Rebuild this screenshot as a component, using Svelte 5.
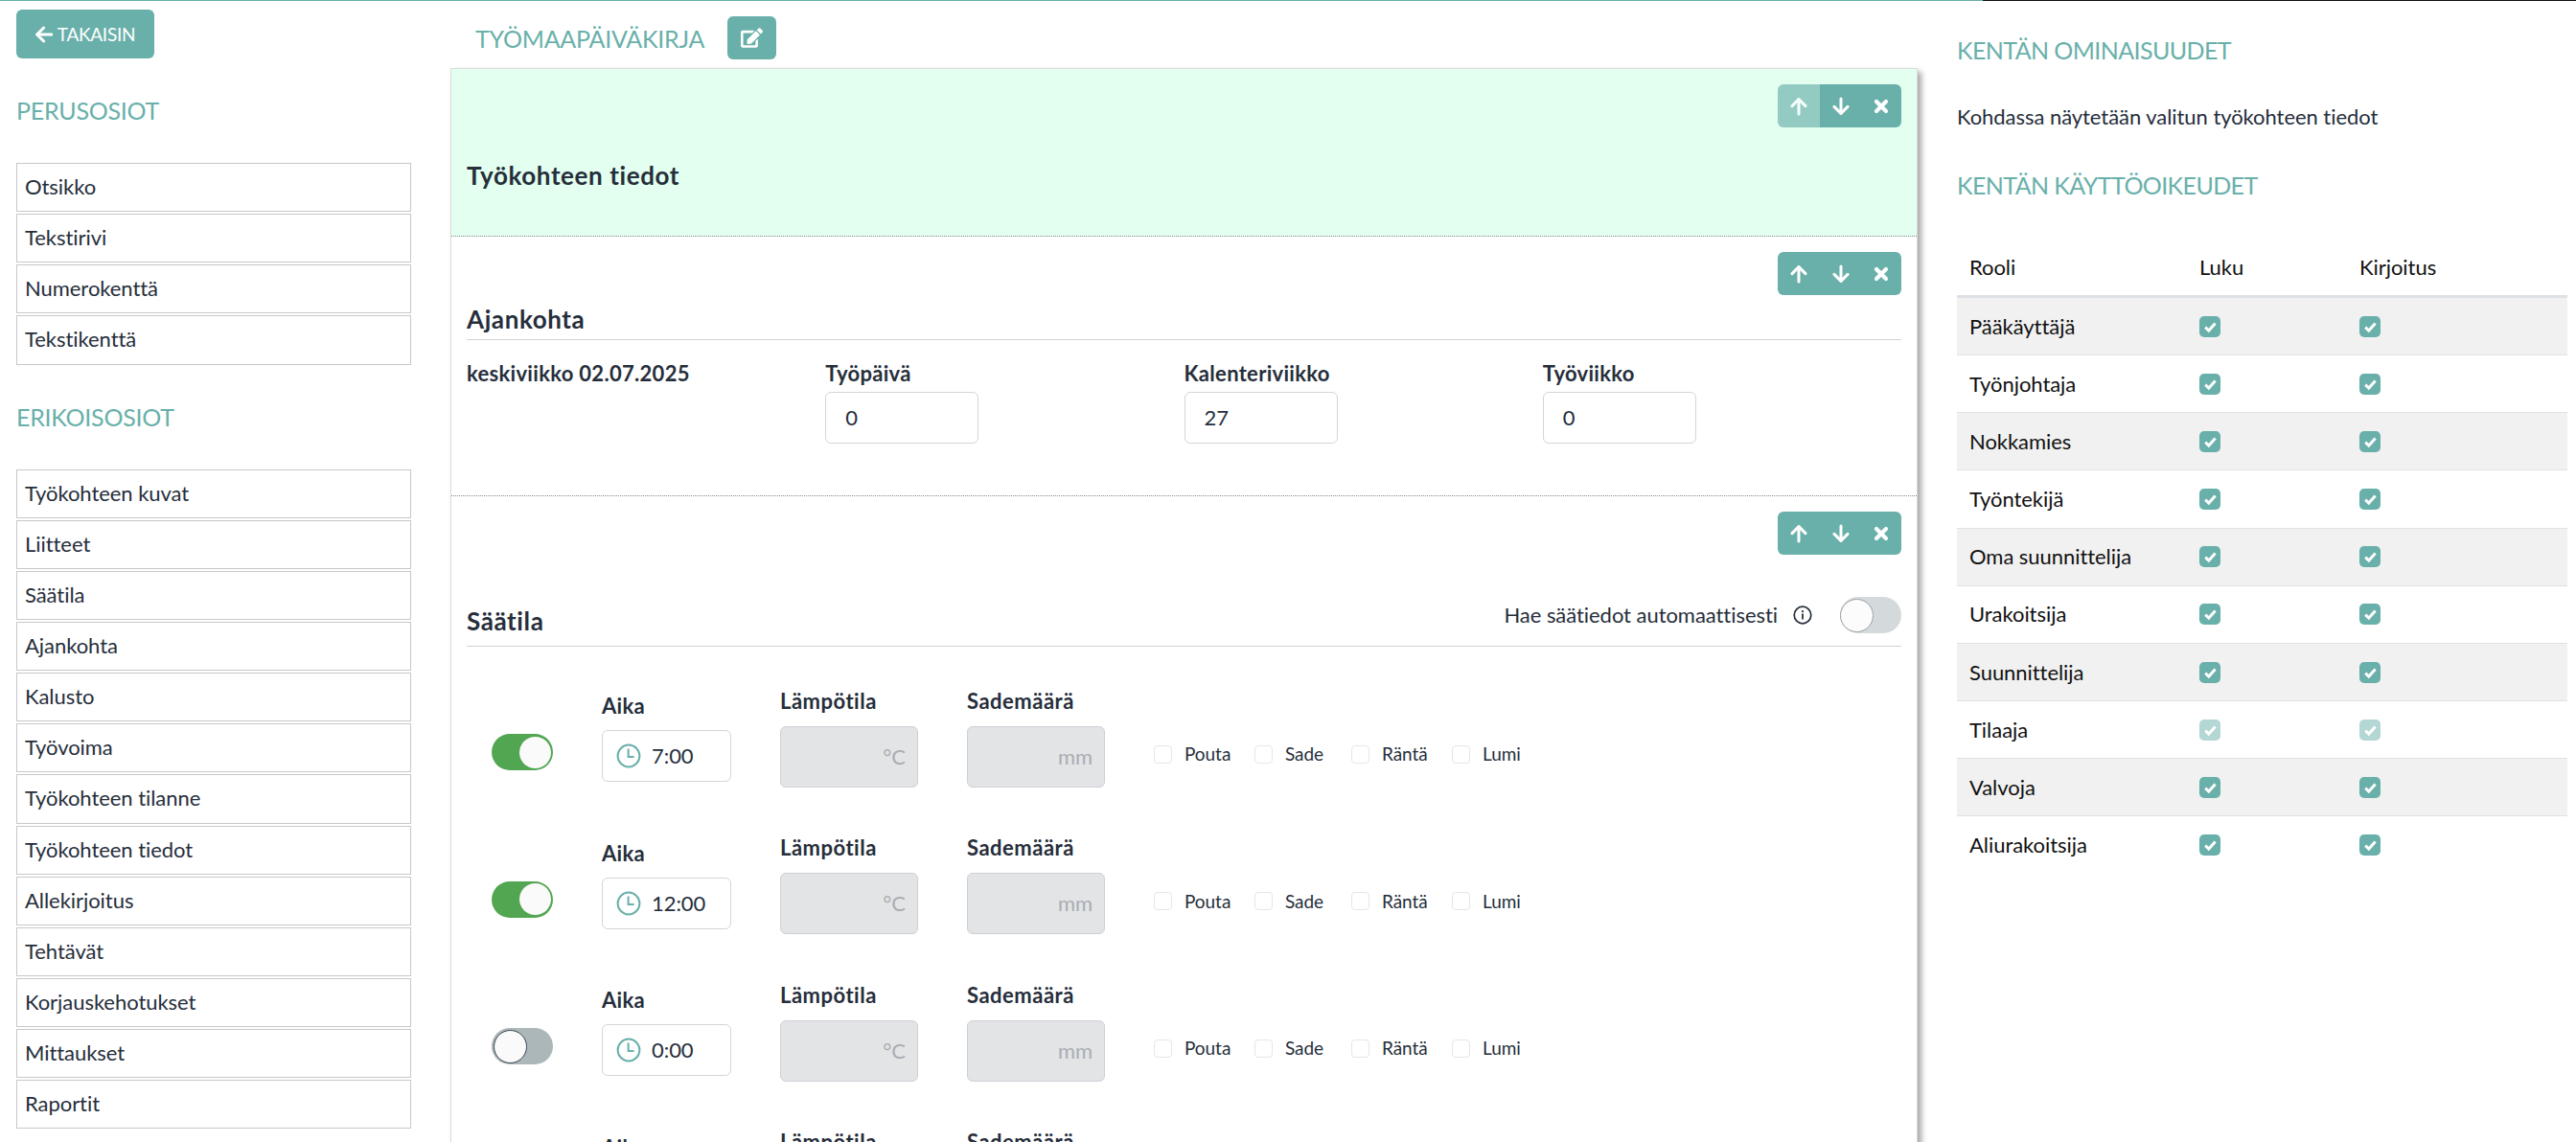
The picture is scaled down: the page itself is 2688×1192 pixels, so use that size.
<script>
  const basicParts = ['Otsikko', 'Tekstirivi', 'Numerokenttä', 'Tekstikenttä']

  const specialParts = [
    'Työkohteen kuvat',
    'Liitteet',
    'Säätila',
    'Ajankohta',
    'Kalusto',
    'Työvoima',
    'Työkohteen tilanne',
    'Työkohteen tiedot',
    'Allekirjoitus',
    'Tehtävät',
    'Korjauskehotukset',
    'Mittaukset',
    'Raportit',
  ]

  const dateFields = [
    { label: 'Työpäivä', value: '0' },
    { label: 'Kalenteriviikko', value: '27' },
    { label: 'Työviikko', value: '0' },
  ]

  const conditions = ['Pouta', 'Sade', 'Räntä', 'Lumi']

  let autoFetch = $state(false)

  let weatherRows = $state([
    { time: '7:00', enabled: true },
    { time: '12:00', enabled: true },
    { time: '0:00', enabled: false },
    { time: '0:00', enabled: false },
  ])

  const roles = [
    { name: 'Pääkäyttäjä' },
    { name: 'Työnjohtaja' },
    { name: 'Nokkamies' },
    { name: 'Työntekijä' },
    { name: 'Oma suunnittelija' },
    { name: 'Urakoitsija' },
    { name: 'Suunnittelija' },
    { name: 'Tilaaja', locked: true },
    { name: 'Valvoja' },
    { name: 'Aliurakoitsija' },
  ]
</script>

{#snippet arrow(angle)}
  <svg class="arrow" viewBox="0 0 18 20" aria-hidden="true">
    <g transform="rotate({angle} 9 10)" fill="none" stroke="currentColor" stroke-width="3" stroke-linecap="round" stroke-linejoin="round">
      <path d="M9 18V2.8" />
      <path d="M2 9.6L9 2.6L16 9.6" />
    </g>
  </svg>
{/snippet}

{#snippet controls(first)}
  <div class="controls">
    <button type="button" disabled={first} aria-label="Siirrä ylös">{@render arrow(0)}</button>
    <button type="button" aria-label="Siirrä alas">{@render arrow(180)}</button>
    <button type="button" aria-label="Poista">
      <svg class="cross" viewBox="0 0 16 16" aria-hidden="true">
        <path d="M3 3L13 13M13 3L3 13" stroke="currentColor" stroke-width="4.2" stroke-linecap="round" />
      </svg>
    </button>
  </div>
{/snippet}

{#snippet check(locked)}
  <span class="check" class:locked>
    <svg viewBox="0 0 22 22" aria-hidden="true">
      <path d="M6.2 11.6L9.8 15L16.6 7.6" fill="none" stroke="#fff" stroke-width="3" />
    </svg>
  </span>
{/snippet}

<div class="page">
  <div class="progress"><div class="progress-done"></div></div>

  <div class="layout">
    <aside class="sidebar">
      <button type="button" class="back">
        {@render arrow(-90)}
        <span>TAKAISIN</span>
      </button>

      <h3>PERUSOSIOT</h3>
      <ul class="parts">
        {#each basicParts as part}
          <li>{part}</li>
        {/each}
      </ul>

      <h3>ERIKOISOSIOT</h3>
      <ul class="parts">
        {#each specialParts as part}
          <li>{part}</li>
        {/each}
      </ul>
    </aside>

    <main>
      <header>
        <h3 class="form-name">TYÖMAAPÄIVÄKIRJA</h3>
        <button type="button" class="edit" aria-label="Muokkaa">
          <svg viewBox="0 0 576 512" aria-hidden="true">
            <path fill="currentColor" d="M402.6 83.2l90.2 90.2c3.8 3.8 3.8 10 0 13.8L274.4 405.6l-92.8 10.3c-12.4 1.4-22.9-9.1-21.5-21.5l10.3-92.8L388.8 83.2c3.8-3.8 10-3.8 13.8 0zm162-22.9l-48.8-48.8c-15.2-15.2-39.9-15.2-55.2 0l-35.4 35.4c-3.8 3.8-3.8 10 0 13.8l90.2 90.2c3.8 3.8 10 3.8 13.8 0l35.4-35.4c15.2-15.3 15.2-40 0-55.2zM384 346.2V448H64V128h229.8c3.2 0 6.2-1.3 8.5-3.5l40-40c7.6-7.6 2.2-20.5-8.5-20.5H48C21.5 64 0 85.5 0 112v352c0 26.5 21.5 48 48 48h352c26.5 0 48-21.5 48-48V306.2c0-10.7-12.9-16-20.5-8.5l-40 40c-2.2 2.3-3.5 5.3-3.5 8.5z" />
          </svg>
        </button>
      </header>

      <div class="form">
        <section class="site selected">
          {@render controls(true)}
          <h2>Työkohteen tiedot</h2>
        </section>

        <section class="date">
          {@render controls(false)}
          <h2>Ajankohta</h2>
          <div class="date-grid">
            <strong>keskiviikko 02.07.2025</strong>
            {#each dateFields as field}
              <label>
                <strong>{field.label}</strong>
                <span class="input">{field.value}</span>
              </label>
            {/each}
          </div>
        </section>

        <section class="weather">
          {@render controls(false)}
          <div class="weather-head">
            <h2>Säätila</h2>
            <div class="auto">
              <span class="auto-label">Hae säätiedot automaattisesti</span>
              <svg class="info" viewBox="0 0 20 20" aria-hidden="true">
                <circle cx="10" cy="10" r="8.8" fill="none" stroke="currentColor" stroke-width="1.7" />
                <path d="M10 8.6V14.4" stroke="currentColor" stroke-width="1.8" />
                <circle cx="10" cy="6.2" r="1.1" fill="currentColor" />
              </svg>
              <button
                type="button"
                class="toggle faded"
                class:on={autoFetch}
                aria-label="Hae säätiedot automaattisesti"
                onclick={() => (autoFetch = !autoFetch)}
              ><span class="knob"></span></button>
            </div>
          </div>

          <div class="weather-rows">
            {#each weatherRows as row}
              <div class="weather-row">
                <button
                  type="button"
                  class="toggle"
                  class:on={row.enabled}
                  aria-label="Käytössä"
                  onclick={() => (row.enabled = !row.enabled)}
                ><span class="knob"></span></button>
                <div class="time">
                  <strong>Aika</strong>
                  <span class="input">
                    <svg class="clock" viewBox="0 0 26 26" fill="none" stroke="currentColor" aria-hidden="true">
                      <circle cx="13" cy="13" r="11.4" stroke-width="2" />
                      <path d="M12.6 5.6V14H18.6" stroke-width="2" />
                    </svg>
                    {row.time}
                  </span>
                </div>
                <div class="measure">
                  <strong>Lämpötila</strong>
                  <span class="input disabled">°C</span>
                </div>
                <div class="measure">
                  <strong>Sademäärä</strong>
                  <span class="input disabled">mm</span>
                </div>
                <div class="conditions">
                  {#each conditions as condition}
                    <span class="box"></span>
                    <span>{condition}</span>
                  {/each}
                </div>
              </div>
            {/each}
          </div>
        </section>
      </div>
    </main>

    <aside class="properties">
      <h3>KENTÄN OMINAISUUDET</h3>
      <p>Kohdassa näytetään valitun työkohteen tiedot</p>
      <h3>KENTÄN KÄYTTÖOIKEUDET</h3>
      <div class="roles">
        <div class="role head">
          <span>Rooli</span>
          <span>Luku</span>
          <span>Kirjoitus</span>
        </div>
        {#each roles as role}
          <div class="role">
            <span>{role.name}</span>
            {@render check(role.locked)}
            {@render check(role.locked)}
          </div>
        {/each}
      </div>
    </aside>
  </div>
</div>

<style>
  :global(body) {
    margin: 0;
    background: #fff;
  }

  .page {
    height: 1192px;
    overflow: hidden;
    font-family: Lato, 'Open Sans', sans-serif;
    font-size: 22px;
    font-weight: 400;
    font-variant-ligatures: none;
    letter-spacing: -0.05px;
    line-height: 28px;
    color: #262e3b;
  }

  .page * {
    box-sizing: border-box;
  }

  .progress {
    height: 1px;
    background: #111;
  }

  .progress-done {
    width: 2069px;
    height: 1px;
    background: #69b0aa;
  }

  .layout {
    display: grid;
    grid-template-columns: 470px 1531px 1fr;
  }

  h2,
  h3,
  p,
  ul {
    margin: 0;
    padding: 0;
  }

  h3 {
    font-size: 25px;
    font-weight: 400;
    letter-spacing: -0.25px;
    line-height: 30px;
    color: #69b0aa;
    white-space: nowrap;
  }

  h2 {
    font-size: 26px;
    font-weight: 700;
    letter-spacing: 0.6px;
    line-height: 32px;
  }

  strong {
    font-size: 22px;
    font-weight: 700;
    letter-spacing: 0.3px;
  }

  button {
    display: flex;
    align-items: center;
    justify-content: center;
    border: 0;
    padding: 0;
    background: #69b0aa;
    color: #fff;
    font: inherit;
  }

  .arrow {
    width: 18px;
    height: 20px;
  }

  .cross {
    width: 16px;
    height: 16px;
  }

  /* sidebar */
  .sidebar {
    padding: 9px 41px 0 17px;
  }

  .back {
    width: 144px;
    height: 51px;
    gap: 5px;
    border-radius: 6px;
    font-size: 19px;
    letter-spacing: -0.3px;
  }

  .sidebar h3 {
    margin: 39px 0 40px;
  }

  .parts {
    list-style: none;
  }

  .parts li {
    height: 51.15px;
    margin-bottom: 2px;
    padding-left: 8px;
    border: 1px solid #c8c8c8;
    line-height: 48px;
  }

  /* form */
  header {
    display: flex;
    align-items: center;
    height: 70px;
    padding: 16px 0 9px 26px;
  }

  .form-name {
    width: 263px;
  }

  .edit {
    width: 51px;
    height: 45px;
    border-radius: 6px;
  }

  .edit svg {
    width: 23px;
    height: 21px;
  }

  .form {
    height: 1300px;
    border: 1px solid #dcdcdc;
    box-shadow: 4px 4px 6px rgba(0, 0, 0, 0.35);
  }

  section {
    padding: 16px 16px 0;
    border-bottom: 1px dotted #888;
  }

  .site {
    height: 175px;
  }

  .selected {
    background: #e2ffef;
  }

  .site h2 {
    margin-top: 34px;
  }

  .controls {
    display: grid;
    grid-template-columns: 44px 43px 42px;
    width: 129px;
    height: 45px;
    margin-left: auto;
    border-radius: 6px;
    overflow: hidden;
  }

  .controls button:disabled {
    opacity: 0.65;
  }

  .date {
    height: 271px;
  }

  .date h2 {
    margin-top: 9px;
    padding-bottom: 5px;
    border-bottom: 1px solid #d2d2d2;
  }

  .date-grid {
    display: grid;
    grid-template-columns: repeat(4, 1fr);
    padding-top: 21px;
  }

  label strong {
    display: block;
  }

  .input {
    display: flex;
    align-items: center;
    width: 160px;
    height: 54px;
    margin-top: 5px;
    padding-left: 20px;
    border: 1px solid #d3d5d9;
    border-radius: 6px;
  }

  .weather {
    border-bottom: 0;
  }

  .weather-head {
    display: flex;
    justify-content: space-between;
    height: 52px;
    margin-top: 44px;
    border-bottom: 1px solid #d2d2d2;
  }

  .weather-head h2 {
    margin-top: 9px;
  }

  .auto {
    display: flex;
    align-items: center;
    height: 38px;
  }

  .info {
    width: 20px;
    height: 20px;
    margin: 0 29px 0 16px;
  }

  .toggle {
    justify-content: flex-start;
    width: 64px;
    height: 38px;
    padding: 0 2px;
    border-radius: 19px;
    background: #abb7b9;
  }

  .knob {
    width: 35px;
    height: 35px;
    border: 1px solid #3b4550;
    border-radius: 50%;
    background: #fafafa;
  }

  .toggle.on {
    justify-content: flex-end;
    background: #52a651;
  }

  .toggle.on .knob {
    width: 33px;
    height: 33px;
    border: 0;
  }

  .faded {
    padding: 0;
    opacity: 0.5;
  }

  .weather-rows {
    padding: 18.3px 0 0 26px;
  }

  .weather-row {
    display: flex;
    align-items: center;
    gap: 51px;
    height: 153.4px;
  }

  .weather-row .toggle {
    margin-top: 31px;
  }

  .time,
  .measure {
    display: flex;
    flex-direction: column;
  }

  .time .input {
    width: 135px;
    margin-top: 11px;
    padding-left: 14px;
    gap: 11px;
  }

  .clock {
    width: 26px;
    height: 26px;
    color: #69b0aa;
  }

  .measure strong {
    letter-spacing: 0.5px;
  }

  .measure .input {
    width: 144px;
    height: 64px;
    margin-top: 12px;
  }

  .input.disabled {
    justify-content: flex-end;
    padding-right: 12px;
    background: #e3e4e6;
    border-color: #cdd0d5;
    color: #a9adb3;
  }

  .conditions {
    display: grid;
    grid-template-columns: 32px 73px 32px 69px 32px 73px 32px 60px;
    align-items: center;
    margin-top: 35px;
    font-size: 19px;
  }

  .box {
    width: 19px;
    height: 19px;
    border: 1px solid #e4e6e9;
    border-radius: 4px;
  }

  /* field properties */
  .properties {
    padding: 36px 9px 0 41px;
  }

  .properties h3 {
    letter-spacing: -0.6px;
  }

  .properties p {
    margin: 41px 0 42px;
  }

  .roles {
    margin-top: 41px;
    color: #111;
  }

  .role {
    display: grid;
    grid-template-columns: 240px 167px 1fr;
    align-items: center;
    height: 60.17px;
    padding-left: 13px;
    border-bottom: 1px solid #dee2e6;
  }

  .role:nth-child(even) {
    background: #f1f1f1;
  }

  .role:last-child {
    border-bottom: 0;
  }

  .role.head {
    height: 62px;
    border-bottom-width: 3px;
  }

  .check {
    display: flex;
    width: 22px;
    height: 22px;
    border-radius: 5px;
    background: #69b0aa;
  }

  .check.locked {
    opacity: 0.5;
  }
</style>
